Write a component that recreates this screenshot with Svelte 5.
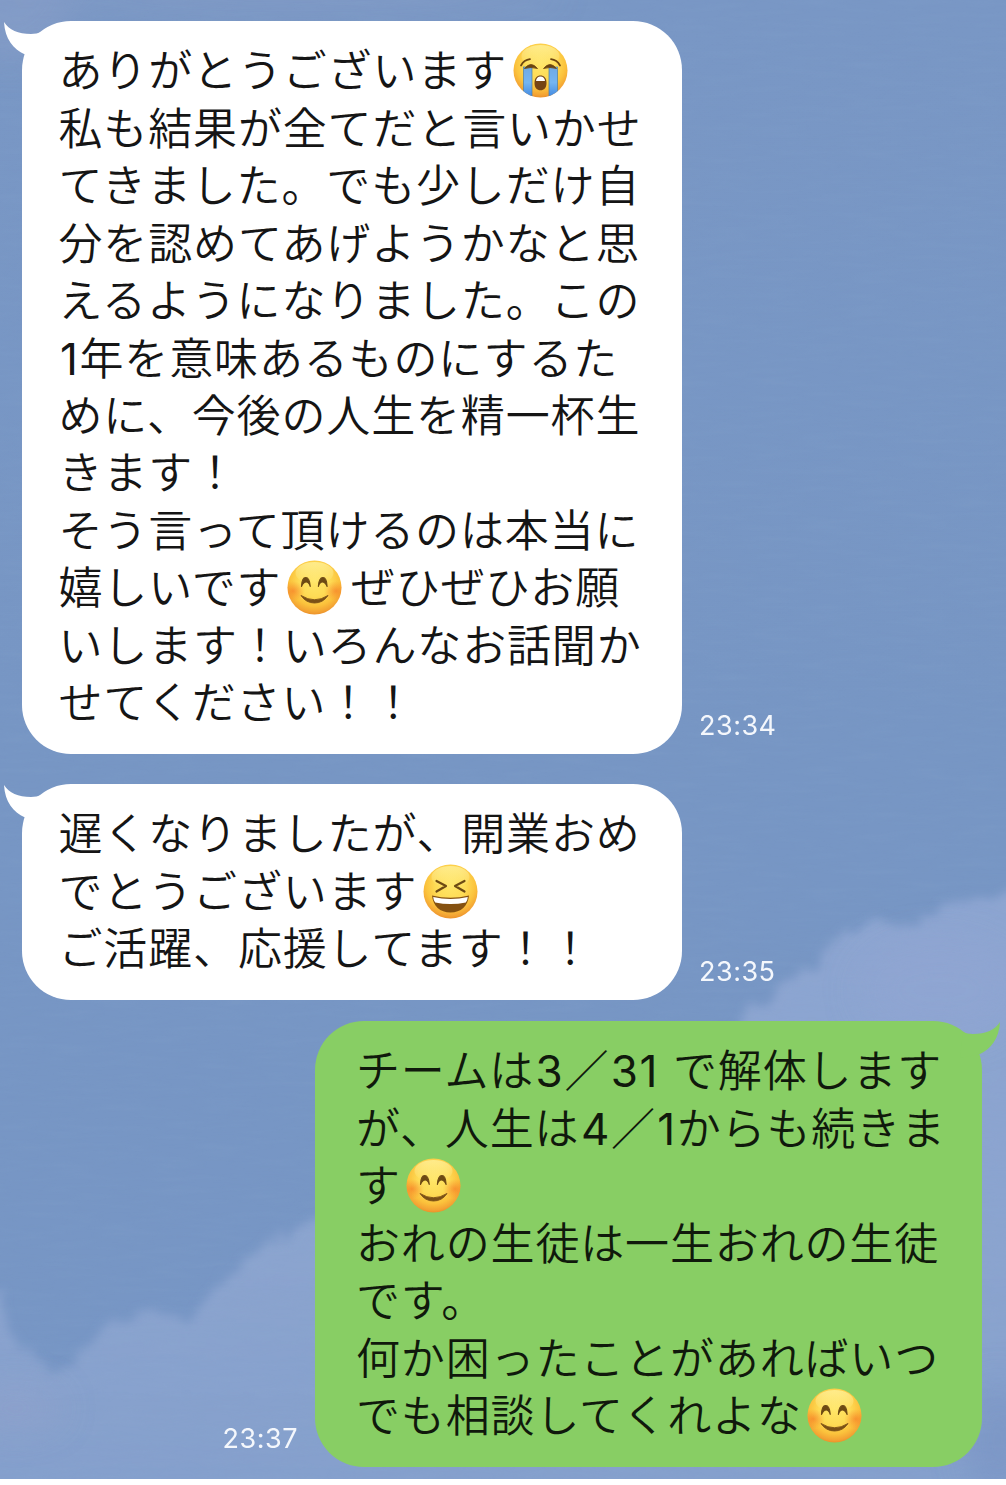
<script>
  const messages = [
    {
      side: "left",
      time: "23:34",
      lines: [
        "ありがとうございます😭",
        "私も結果が全てだと言いかせ",
        "てきました。でも少しだけ自",
        "分を認めてあげようかなと思",
        "えるようになりました。この",
        "1年を意味あるものにするた",
        "めに、今後の人生を精一杯生",
        "きます！",
        "そう言って頂けるのは本当に",
        "嬉しいです😊ぜひぜひお願",
        "いします！いろんなお話聞か",
        "せてください！！",
      ],
    },
    {
      side: "left",
      time: "23:35",
      lines: [
        "遅くなりましたが、開業おめ",
        "でとうございます😆",
        "ご活躍、応援してます！！",
      ],
    },
    {
      side: "right",
      time: "23:37",
      lines: [
        "チームは3／31 で解体します",
        "が、人生は4／1からも続きま",
        "す😊",
        "おれの生徒は一生おれの生徒",
        "です。",
        "何か困ったことがあればいつ",
        "でも相談してくれよな😊",
      ],
    },
  ];

  const emoji = { "😭": "cry", "😊": "smile", "😆": "laugh" };

  // cut a line into plain text, digits and emoji
  const split = (line) => line.split(/(😭|😊|😆|\d+ ?)/u).filter((part) => part !== "");
</script>

<svg class="defs" width="0" height="0" aria-hidden="true">
  <defs>
    <radialGradient id="face" cx=".5" cy=".38" r=".64">
      <stop offset="0" stop-color="#ffe668" />
      <stop offset=".45" stop-color="#fedb55" />
      <stop offset=".72" stop-color="#fbc23c" />
      <stop offset=".9" stop-color="#f3a233" />
      <stop offset="1" stop-color="#e88a26" />
    </radialGradient>
    <linearGradient id="shine" x1="0" y1="0" x2="0" y2="1">
      <stop offset="0" stop-color="#fff3a0" stop-opacity=".75" />
      <stop offset="1" stop-color="#fff3a0" stop-opacity="0" />
    </linearGradient>
    <radialGradient id="blush">
      <stop offset="0" stop-color="#f4601f" stop-opacity=".5" />
      <stop offset="1" stop-color="#f4701f" stop-opacity="0" />
    </radialGradient>
    <linearGradient id="tear" x1="0" y1="0" x2="0" y2="1">
      <stop offset="0" stop-color="#6fa9e4" />
      <stop offset=".5" stop-color="#74b5f2" />
      <stop offset="1" stop-color="#3e86df" />
    </linearGradient>
    <clipPath id="round"><circle cx="27.5" cy="27.5" r="27" /></clipPath>
  </defs>

  <symbol id="cry" viewBox="0 0 55 55">
    <circle cx="27.5" cy="27.5" r="27" fill="url(#face)" />
    <ellipse cx="27.5" cy="13" rx="19" ry="11" fill="url(#shine)" />
    <g clip-path="url(#round)">
      <rect x="10.5" y="24" width="8.5" height="31" fill="url(#tear)" stroke="#4b7fa8" stroke-width=".7" />
      <rect x="36" y="24" width="8.5" height="31" fill="url(#tear)" stroke="#4b7fa8" stroke-width=".7" />
    </g>
    <path d="M8 22.5Q11 17 17 16.2M47 22.5Q44 17 38 16.2" fill="none" stroke="#6b4410" stroke-width="1.7" stroke-linecap="round" />
    <path d="M11.500 25.500Q18 17.500 24.500 25.500Q18 23.500 11.500 25.500ZM30.500 25.500Q37 17.500 43.500 25.500Q37 23.500 30.500 25.500Z" fill="#6b4410" stroke="#6b4410" stroke-width=".8" />
    <path d="M21.500 40C21.500 35 24 32.500 27.500 32.500S33.500 35 33.500 40C33.500 45 31 47.300 27.500 47.300S21.500 45 21.500 40Z" fill="#754414" />
    <path d="M23 38Q23.500 33.500 27.500 33.500T32 38Z" fill="#fff" />
  </symbol>

  <symbol id="smile" viewBox="0 0 55 55">
    <circle cx="27.5" cy="27.5" r="27" fill="url(#face)" />
    <ellipse cx="27.5" cy="13" rx="19" ry="11" fill="url(#shine)" />
    <g clip-path="url(#round)">
      <ellipse cx="6" cy="31" rx="12" ry="10" fill="url(#blush)" />
      <ellipse cx="49" cy="31" rx="12" ry="10" fill="url(#blush)" />
    </g>
    <path
      d="M14.500 26.500C14.800 14.500 22.500 14.500 23.300 26.500C21.300 20.500 17.300 20.500 14.500 26.500ZM31.300 26.500C32.100 14.500 39.800 14.500 40.100 26.500C37.300 20.500 33.300 20.500 31.300 26.500Z"
      fill="#6d4a14" stroke="#6d4a14" stroke-width="1.1" stroke-linejoin="round"
    />
    <path d="M14 35.500Q27.500 44 41 35.500Q36 43 27.500 43T14 35.500Z" fill="#7a5016" stroke="#7a5016" stroke-width=".9" stroke-linejoin="round" />
  </symbol>

  <symbol id="laugh" viewBox="0 0 55 55">
    <circle cx="27.5" cy="27.5" r="27" fill="url(#face)" />
    <ellipse cx="27.5" cy="13" rx="19" ry="11" fill="url(#shine)" />
    <path d="M13.500 17L23 22L13.500 27.500M41.500 17L32 22L41.500 27.500" fill="none" stroke="#6d4a14" stroke-width="2.2" stroke-linecap="round" stroke-linejoin="round" />
    <path d="M9 31.500Q27.500 36 46 31.500C45 42 38 48.500 27.500 48.500S10 42 9 31.500Z" fill="#855110" />
    <path d="M10.200 33Q27.500 37 44.800 33Q44.500 37 42.800 38.500Q27.500 41.500 12.200 38.500Q10.500 37 10.200 33Z" fill="#fff" />
  </symbol>
</svg>

<main class="chat">
  <svg class="sky" viewBox="0 0 1006 1479" preserveAspectRatio="none" aria-hidden="true">
    <defs>
      <linearGradient id="air" x1="0" y1="0" x2="0" y2="1">
        <stop offset="0" stop-color="#7997c5" />
        <stop offset=".5" stop-color="#7796c4" />
        <stop offset="1" stop-color="#7796c5" />
      </linearGradient>
      <linearGradient id="cloud" x1="0" y1="0" x2="0" y2="1">
        <stop offset="0" stop-color="#8da5d1" />
        <stop offset=".6" stop-color="#8ba4cf" />
        <stop offset="1" stop-color="#849fcc" />
      </linearGradient>
      <filter id="fluff" x="-5%" y="-5%" width="110%" height="110%">
        <feTurbulence type="fractalNoise" baseFrequency=".05" numOctaves="3" seed="9" />
        <feDisplacementMap in="SourceGraphic" scale="22" xChannelSelector="R" yChannelSelector="G" />
        <feGaussianBlur stdDeviation="5" />
      </filter>
      <filter id="soft" x="-60%" y="-60%" width="220%" height="220%"><feGaussianBlur stdDeviation="18" /></filter>
      <filter id="streaks" x="0" y="0" width="100%" height="100%">
        <feTurbulence type="fractalNoise" baseFrequency=".02 .16" numOctaves="2" seed="7" />
        <feColorMatrix values="0 0 0 0 .3  0 0 0 0 .46  0 0 0 0 .68  .55 0 0 0 -.2" />
      </filter>
    </defs>
    <rect width="1006" height="1479" fill="url(#air)" />
    <g fill="#94a2cb" filter="url(#soft)">
      <ellipse cx="10" cy="0" rx="60" ry="60" opacity=".35" />
      <ellipse cx="300" cy="-6" rx="260" ry="16" opacity=".3" />
    </g>
    <path
      fill="url(#cloud)" filter="url(#fluff)"
      d="M-30 1290L2 1298L10 1338L34 1350L48 1376L72 1364L108 1328L140 1314L170 1314L190 1322L218 1284L250 1254L320 1218L500 1120L700 1045L770 1002L792 975L818 968L832 940L880 918L912 926L950 904L1050 884V1520H-30Z"
    />
    <g filter="url(#soft)">
      <ellipse cx="15" cy="1408" rx="45" ry="20" fill="#99a2cc" opacity=".4" />
      <ellipse cx="940" cy="990" rx="80" ry="50" fill="#95a7d3" opacity=".35" />
      <ellipse cx="998" cy="1440" rx="30" ry="60" fill="#7390c2" opacity=".5" />
    </g>
    <rect width="1006" height="1479" filter="url(#streaks)" opacity=".3" />
  </svg>

  {#each messages as message}
    <div class="message {message.side}">
      <div class="bubble">
        <svg class="tail" viewBox="0 0 40 36" aria-hidden="true">
          <path d="M0 0C5 8 14 12 27 12Q33 12 37 10L40 36L21 32.500C9 27 1 17 0 0Z" />
        </svg>
        {#each message.lines as line}
          <div class="line">
            {#each split(line) as part}{#if emoji[part]}<svg class="emoji" role="img" aria-label={part}><use href="#{emoji[part]}" /></svg>{:else if /\d/.test(part)}<span class="digits">{part}</span>{:else}{part}{/if}{/each}
          </div>
        {/each}
      </div>
      <time>{message.time}</time>
    </div>
  {/each}
</main>

<style>
  :global(body) {
    background: #fff;
  }

  .defs {
    position: absolute;
  }

  .chat {
    position: relative;
    display: flex;
    flex-flow: column;
    box-sizing: border-box;
    height: 1479px;
    padding: 21px 24px 12px 22px;
    overflow: hidden;
    font-family: "Noto Sans CJK JP", sans-serif;
  }

  .sky {
    position: absolute;
    top: 0;
    left: 0;
    width: 100%;
    height: 100%;
  }

  .message {
    position: relative;
    display: flex;
    align-items: flex-end;
    gap: 17px;
  }

  .message + .message {
    margin-top: 30px;
  }

  .message + .right {
    flex-direction: row-reverse;
    margin-top: 21px;
  }

  .bubble {
    position: relative;
    box-sizing: border-box;
    width: 660px;
    padding: 19.400px 0 24.300px 36.500px;
    border-radius: 49px;
    background: #fff;
    color: #151515;
    font-size: 44px;
    font-weight: 350;
    letter-spacing: .85px;
    line-height: 57.440px;
  }

  .right .bubble {
    width: 667px;
    padding-left: 41px;
    background: #88ce64;
    color: #10190c;
  }

  .tail {
    position: absolute;
    top: 1px;
    left: -18px;
    width: 40px;
    height: 36px;
    fill: #fff;
  }

  .right .tail {
    left: auto;
    right: -18px;
    fill: #88ce64;
    transform: scaleX(-1);
  }

  .line {
    height: 57.440px;
    white-space: nowrap;
  }

  .digits {
    margin-left: 1.500px;
    font-family: Inter, sans-serif;
    font-weight: 400;
    letter-spacing: 1.600px;
    white-space: pre;
  }

  .emoji {
    width: 55px;
    height: 55px;
    margin: 0 9px 0 5.500px;
    vertical-align: -11px;
  }

  time {
    padding-bottom: 11.500px;
    color: #f4f7fc;
    font-family: Inter, sans-serif;
    font-size: 27px;
    letter-spacing: .5px;
    line-height: 33px;
  }
</style>
